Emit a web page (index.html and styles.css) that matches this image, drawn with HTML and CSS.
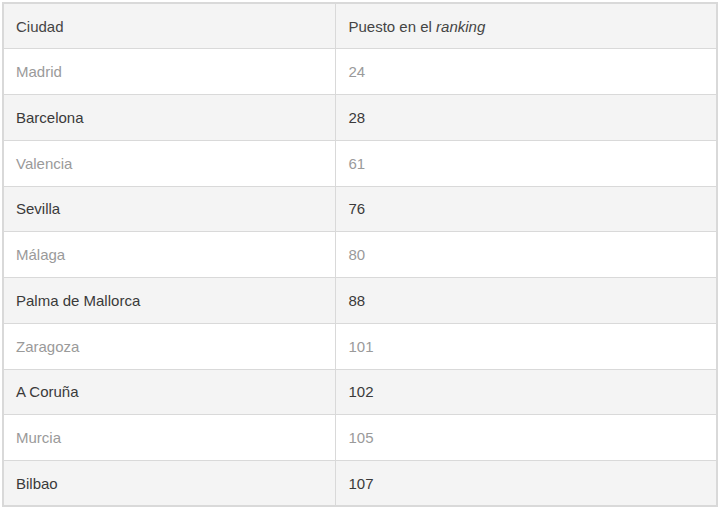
FILE: index.html
```html
<!DOCTYPE html>
<html lang="es">
<head>
<meta charset="utf-8">
<link rel="stylesheet" href="styles.css">
</head>
<body>
<table class="ranking">
  <thead>
    <tr><th class="col-city">Ciudad</th><th>Puesto en el <em>ranking</em></th></tr>
  </thead>
  <tbody>
    <tr><td>Madrid</td><td>24</td></tr>
    <tr><td>Barcelona</td><td>28</td></tr>
    <tr><td>Valencia</td><td>61</td></tr>
    <tr><td>Sevilla</td><td>76</td></tr>
    <tr><td>Málaga</td><td>80</td></tr>
    <tr><td>Palma de Mallorca</td><td>88</td></tr>
    <tr><td>Zaragoza</td><td>101</td></tr>
    <tr><td>A Coruña</td><td>102</td></tr>
    <tr><td>Murcia</td><td>105</td></tr>
    <tr><td>Bilbao</td><td>107</td></tr>
  </tbody>
</table>
</body>
</html>
```
FILE: styles.css
```css
html, body {
  margin: 0;
  padding: 0;
  background: #ffffff;
}
body {
  padding: 2px 2px 0 2px;
  font-family: "Liberation Sans", Arial, sans-serif;
  font-size: 15px;
}
.ranking {
  width: 716px;
  border-collapse: collapse;
  table-layout: fixed;
  border: 2px solid #d9d9d9;
}
.ranking th,
.ranking td {
  border: 1.6px solid #d9d9d9;
  height: 45.75px;
  padding: 0 0 0 13px;
  text-align: left;
  font-weight: normal;
  vertical-align: middle;
  box-sizing: border-box;
}
.ranking .col-city,
.ranking td:first-child {
  padding-left: 12px;
}
.ranking .col-city {
  width: 332px;
}
.ranking thead th {
  background: #f4f4f4;
  color: #444444;
}
.ranking em {
  font-style: italic;
}
.ranking tbody tr:nth-child(odd) td {
  background: #ffffff;
  color: #9a9a9a;
}
.ranking tbody tr:nth-child(even) td {
  background: #f4f4f4;
  color: #3a3a3a;
}
```
